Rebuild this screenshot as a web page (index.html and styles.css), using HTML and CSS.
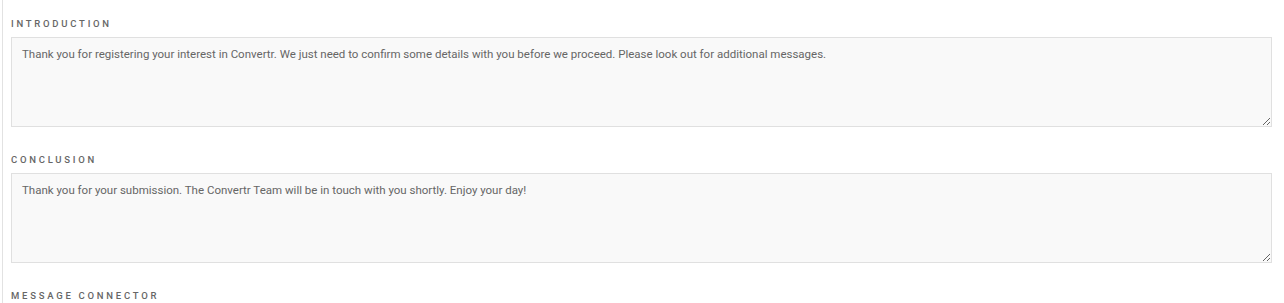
FILE: index.html
```html
<!DOCTYPE html>
<html>
<head>
<meta charset="utf-8">
<link rel="stylesheet" href="styles.css">
</head>
<body>
<div class="panel">
  <div class="field">
    <label class="label">Introduction</label>
    <textarea class="input">Thank you for registering your interest in Convertr. We just need to confirm some details with you before we proceed. Please look out for additional messages.</textarea>
  </div>
  <div class="field">
    <label class="label">Conclusion</label>
    <textarea class="input">Thank you for your submission. The Convertr Team will be in touch with you shortly. Enjoy your day!</textarea>
  </div>
  <div class="field">
    <label class="label">Message Connector</label>
  </div>
</div>
</body>
</html>
```
FILE: styles.css
```css
html, body {
  margin: 0;
  padding: 0;
  background: #fff;
  font-family: Roboto, "Liberation Sans", sans-serif;
}
.panel {
  margin-left: 2px;
  border-left: 1px solid #e2e2e2;
  padding: 18px 12px 0 8px;
  height: 303px;
  box-sizing: border-box;
  overflow: hidden;
}
.field {
  display: flex;
  flex-direction: column;
  gap: 7px;
  margin-bottom: 27px;
}
.field:last-child {
  margin-bottom: 0;
}
.label {
  display: block;
  font-size: 9.5px;
  line-height: 12px;
  font-weight: 500;
  letter-spacing: 2.75px;
  text-transform: uppercase;
  color: #666;
}
.input {
  display: block;
  box-sizing: border-box;
  width: 100%;
  height: 90px;
  margin: 0;
  padding: 9px 10px;
  background: #f9f9f9;
  border: 1px solid #e0e0e0;
  border-radius: 0;
  font-family: Roboto, "Liberation Sans", sans-serif;
  font-size: 11.5px;
  line-height: 15px;
  color: #666;
  resize: vertical;
  outline: none;
}
```
